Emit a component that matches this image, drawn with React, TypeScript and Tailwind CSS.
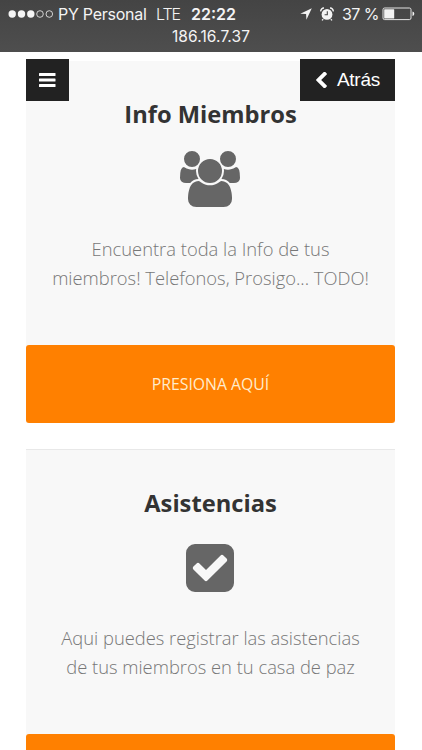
import type { ReactNode } from 'react';

function UsersIcon() {
    return (
        <svg viewBox="0 0 1920 1792" className="w-[60px] h-[56px] shrink-0" fill="currentColor">
            <path d="M593 896q-162 5-265 128h-134q-82 0-138-40.5t-56-118.5q0-353 124-353 6 0 43.5 21t97.5 42.5 119 21.5q67 0 133-23-5 37-5 66 0 139 81 256zm1071 637q0 120-73 189.5t-194 69.5h-874q-121 0-194-69.5t-73-189.5q0-53 3.5-103.5t14-109 26.5-108.5 43-97.5 62-81 85.5-53.5 111.5-20q10 0 43 21.5t73 48 107 48 135 21.5 135-21.5 107-48 73-48 43-21.5q61 0 111.5 20t85.5 53.5 62 81 43 97.5 26.5 108.5 14 109 3.5 103.5zm-1024-1277q0 106-75 181t-181 75-181-75-75-181 75-181 181-75 181 75 75 181zm704 384q0 159-112.5 271.5t-271.5 112.5-271.5-112.5-112.5-271.5 112.5-271.5 271.5-112.5 271.5 112.5 112.5 271.5zm576 225q0 78-56 118.5t-138 40.5h-134q-103-123-265-128 81-117 81-256 0-29-5-66 66 23 133 23 59 0 119-21.5t97.5-42.5 43.5-21q124 0 124 353zm-128-609q0 106-75 181t-181 75-181-75-75-181 75-181 181-75 181 75 75 181z" />
        </svg>
    );
}

function CheckSquareIcon() {
    return (
        <svg viewBox="128 128 1536 1536" className="w-[48px] h-[48px] shrink-0" fill="currentColor">
            <path d="M813 1299l614-614q19-19 19-45t-19-45l-102-102q-19-19-45-19t-45 19l-467 467-211-211q-19-19-45-19t-45 19l-102 102q-19 19-19 45t19 45l358 358q19 19 45 19t45-19zm851-883v960q0 119-84.5 203.5t-203.5 84.5h-960q-119 0-203.5-84.5t-84.5-203.5v-960q0-119 84.5-203.5t203.5-84.5h960q119 0 203.5 84.5t84.5 203.5z" />
        </svg>
    );
}

function StatusBar() {
    return (
        <header className="h-[52px] bg-gradient-to-b from-[#444444] to-[#4e4e4e] text-[#f4f4f4] font-['Inter','Liberation_Sans',sans-serif]">
            <div className="flex items-center h-[28px] pl-[8px] pr-[7px] text-[16px] leading-none">
                <svg viewBox="0 0 46 8" className="w-[46px] h-[8px]" fill="currentColor">
                    <circle cx="4.2" cy="4" r="3.7" />
                    <circle cx="13.5" cy="4" r="3.7" />
                    <circle cx="22.8" cy="4" r="3.7" />
                    <circle cx="32" cy="4" r="3.3" fill="none" stroke="currentColor" strokeWidth="0.8" />
                    <circle cx="41.3" cy="4" r="3.3" fill="none" stroke="currentColor" strokeWidth="0.8" />
                </svg>
                <span className="ml-[4px] w-[98px] whitespace-nowrap text-[16px] tracking-[-0.25px]">PY Personal</span>
                <span className="w-[35px] whitespace-nowrap text-[16px] font-light tracking-[-1.1px]">LTE</span>
                <span className="font-semibold text-[16px]">22:22</span>
                <svg viewBox="0 0 12 12" className="ml-auto w-[12px] h-[12px]" fill="currentColor">
                    <path d="M11.8.3 6.4 11.7 6.1 6.1.3 5.8z" />
                </svg>
                <svg viewBox="0 0 14 14" className="ml-[8px] w-[14px] h-[14px]">
                    <path d="M3.2 12.2 2 13.4M10.8 12.2 12 13.4" stroke="currentColor" strokeWidth="1.3" />
                    <path d="M.8 4.3A3 3 0 0 1 4 1M13.2 4.3A3 3 0 0 0 10 1" fill="none" stroke="currentColor" strokeWidth="1.5" />
                    <circle cx="7" cy="7.4" r="5.4" fill="currentColor" />
                    <path d="M7.3 4.3v3.5H4.6" fill="none" stroke="#484848" strokeWidth="1.1" />
                </svg>
                <span className="ml-[8px] w-[40px] whitespace-nowrap text-[16px] tracking-[-0.6px]">37 %</span>
                <svg viewBox="0 0 33 14" className="w-[33px] h-[14px]" fill="currentColor">
                    <rect x="1" y="1" width="28" height="11.6" rx="1.6" fill="none" stroke="currentColor" strokeWidth="0.9" />
                    <rect x="2.2" y="2.2" width="10" height="9.2" rx="0.5" />
                    <path d="M30.5 4.5q1.8.6 1.8 2.3t-1.8 2.3z" />
                </svg>
            </div>
            <p className="text-center text-[15.5px] leading-[17px] tracking-[0.1px]">186.16.7.37</p>
        </header>
    );
}

function TopNav() {
    return (
        <nav className="absolute left-[26px] right-[27px] top-[7px] flex justify-between text-white">
            <button className="flex items-center justify-center w-[43px] h-[42px] bg-[#222222]" aria-label="Menu">
                <svg viewBox="0 0 17 14" className="w-[17px] h-[14px]" fill="currentColor">
                    <rect y="0" width="16.5" height="3" rx="0.5" />
                    <rect y="5.5" width="16.5" height="3" rx="0.5" />
                    <rect y="11" width="16.5" height="3" rx="0.5" />
                </svg>
            </button>
            <button className="flex items-center w-[95px] h-[42px] pl-[16px] bg-[#222222] text-[19px] tracking-[-0.3px] font-['Liberation_Sans',sans-serif]">
                <svg viewBox="410 70 1036 1524" className="w-[11px] h-[16px]" fill="currentColor">
                    <path d="M1427 301l-531 531 531 531q19 19 19 45t-19 45l-166 166q-19 19-45 19t-45-19l-742-742q-19-19-19-45t19-45l742-742q19-19 45-19t45 19l166 166q19 19 19 45t-19 45z" />
                </svg>
                <span className="ml-[10px] pt-px">Atrás</span>
            </button>
        </nav>
    );
}

type CardProps = {
    title: string;
    icon: ReactNode;
    lines: string[];
    action?: string;
    className: string;
};

function Card({ title, icon, lines, action, className }: CardProps) {
    return (
        <section className={`flex flex-col items-center shrink-0 bg-[#f8f8f8] ${className}`}>
            <h2 className="text-[23.7px] leading-[32px] font-bold text-[#333333]">{title}</h2>
            <div className="flex items-center h-[60px] mt-[19px] pr-px text-[#666666]">{icon}</div>
            <p className="mt-[25px] h-[111px] text-center whitespace-nowrap text-[18.35px] leading-[29px] font-light text-[#777777]">
                {lines.map((line) => (
                    <span key={line} className="block">{line}</span>
                ))}
            </p>
            <button className="w-full h-[78px] pt-[2px] shrink-0 rounded-[3px] bg-[#ff8000] text-[15.8px] text-[#ffeccc]">
                {action}
            </button>
        </section>
    );
}

export default function App() {
    return (
        <div className="w-full h-[750px] overflow-hidden bg-white font-['Open_Sans',sans-serif]">
            <StatusBar />
            <main className="relative flex flex-col gap-[26px] h-[698px] overflow-hidden pl-[26px] pr-[27px] pt-[9px]">
                <Card
                    title="Info Miembros"
                    icon={<UsersIcon />}
                    lines={['Encuentra toda la Info de tus', 'miembros! Telefonos, Prosigo... TODO!']}
                    action="PRESIONA AQUÍ"
                    className="pt-[37px]"
                />
                <Card
                    title="Asistencias"
                    icon={<CheckSquareIcon />}
                    lines={['Aqui puedes registrar las asistencias', 'de tus miembros en tu casa de paz']}
                    className="pt-[37px] border-t border-[#e8e8e8]"
                />
                <TopNav />
            </main>
        </div>
    );
}
